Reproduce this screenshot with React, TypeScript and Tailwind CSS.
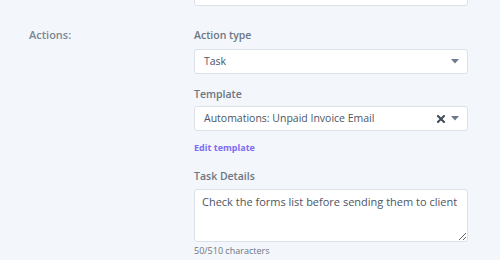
import React from 'react';

const Caret: React.FC = () => (
  <svg width="8" height="5" viewBox="0 0 8 5" className="shrink-0">
    <path d="M0 0 L8 0 L4 4.5 Z" fill="#6b7a8c" />
  </svg>
);

const Clear: React.FC = () => (
  <svg width="8" height="8" viewBox="0 0 8 8" className="shrink-0 mr-[6px]">
    <path d="M1 1 L7 7 M7 1 L1 7" stroke="#3f4a57" strokeWidth="2" strokeLinecap="square" />
  </svg>
);

const App: React.FC = () => {
  return (
    <div
      className="w-[500px] h-[260px] overflow-hidden bg-[#f3f6fa]"
      style={{ fontFamily: '"Open Sans", "Noto Sans", sans-serif' }}
    >
      <div className="flex">
        <div className="w-[194px] shrink-0 pl-[29px] pt-[27px] text-[11px] font-semibold text-[#7c8694] leading-[16px]">
          Actions:
        </div>
        <div className="w-[274px] flex flex-col">
          <div className="h-[20px] mt-[-14px] bg-white border border-[#dde2e8] rounded-[3px]" />
          <label className="mt-[21px] h-[16px] text-[10.5px] font-semibold text-[#6b7785] leading-[16px]">
            Action type
          </label>
          <div className="mt-[6px] h-[25px] bg-white border border-[#dde2e8] rounded-[3px] flex items-center pl-[9px] pr-[8px]">
            <span className="flex-1 text-[10.5px] text-[#4b5563]">Task</span>
            <Caret />
          </div>
          <label className="mt-[12px] h-[16px] text-[10.5px] font-semibold text-[#6b7785] leading-[16px]">
            Template
          </label>
          <div className="mt-[4px] h-[25px] bg-white border border-[#dde2e8] rounded-[3px] flex items-center pl-[9px] pr-[8px]">
            <span className="flex-1 text-[10.5px] text-[#4b5563]">Automations: Unpaid Invoice Email</span>
            <Clear />
            <Caret />
          </div>
          <a className="mt-[10px] h-[14px] text-[9px] font-bold text-[#7b6cf6] leading-[14px]">Edit template</a>
          <label className="mt-[13px] h-[16px] text-[10.5px] font-semibold text-[#6b7785] leading-[16px]">
            Task Details
          </label>
          <textarea
            className="mt-[5px] h-[53px] bg-white border border-[#dde2e8] rounded-[3px] px-[7px] py-[4px] text-[11px] leading-[16px] text-[#4b5563] resize-y outline-none"
            defaultValue="Check the forms list before sending them to client"
          />
          <span className="mt-[2px] text-[9px] text-[#6b7785] leading-[14px]">50/510 characters</span>
        </div>
      </div>
    </div>
  );
};

export default App;
